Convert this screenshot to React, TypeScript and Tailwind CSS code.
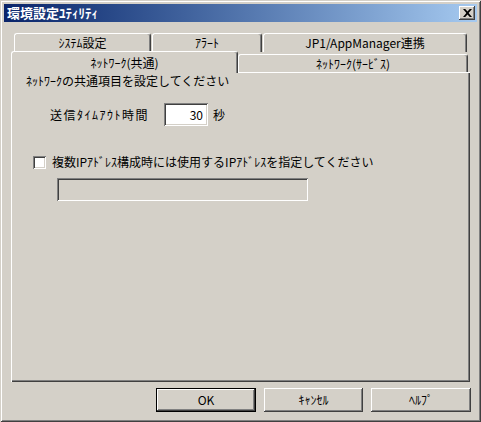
const raised =
  "shadow-[inset_-1px_-1px_0_#404040,inset_1px_1px_0_#ffffff,inset_-2px_-2px_0_#808080,inset_2px_2px_0_#d4d0c8]";
const sunken =
  "shadow-[inset_1px_1px_0_#808080,inset_-1px_-1px_0_#ffffff,inset_2px_2px_0_#404040,inset_-2px_-2px_0_#d4d0c8]";
const frame =
  "shadow-[inset_1px_1px_0_#d4d0c8,inset_-1px_-1px_0_#404040,inset_2px_2px_0_#ffffff,inset_-2px_-2px_0_#808080]";

const Tab = ({ label, className }: { label: string; className: string }) => (
  <div
    className={`flex items-center justify-center bg-[#d4d0c8] border-l border-t border-r border-l-white border-t-white border-r-[#404040] rounded-t-[3px] shadow-[inset_-1px_0_0_#808080] ${className}`}
  >
    {label}
  </div>
);

const Button = ({ label, isDefault }: { label: string; isDefault?: boolean }) => (
  <div
    className={`flex items-center justify-center h-[24px] ${
      isDefault ? "border border-black" : ""
    }`}
  >
    <div className={`w-full h-full flex items-center justify-center ${raised}`}>{label}</div>
  </div>
);

export default function App() {
  return (
    <div
      className={`w-[481px] h-[422px] bg-[#d4d0c8] p-[4px] flex flex-col text-[12px] leading-[14px] text-black font-['Noto_Sans_CJK_JP',sans-serif] ${frame}`}
    >
      {/* title bar */}
      <div className="h-[18px] flex items-center justify-between bg-linear-to-r from-[#0a246a] to-[#a6caf0]">
        <span className="pl-[3px] text-white font-bold text-[13px]">環境設定ﾕﾃｨﾘﾃｨ</span>
        <div className={`mr-[2px] w-[16px] h-[14px] bg-[#d4d0c8] flex items-center justify-center ${raised}`}>
          <svg width="9" height="8" viewBox="0 0 9 8">
            <path d="M0 0h2.2l2.3 2.4L6.8 0H9L5.6 4 9 8H6.8L4.5 5.6 2.2 8H0l3.4-4z" fill="#000" />
          </svg>
        </div>
      </div>

      {/* tabs */}
      <div className="mt-[11px] pl-[7px]">
        <div className="flex h-[19px] pl-[3px] gap-px">
          <Tab label="ｼｽﾃﾑ設定" className="w-[137px] h-full" />
          <Tab label="ｱﾗｰﾄ" className="w-[110px] h-full" />
          <Tab label="JP1/AppManager連携" className="w-[204px] h-full" />
        </div>
        <div className="flex items-end h-[21px] -mt-px">
          <Tab label="ﾈｯﾄﾜｰｸ(共通)" className="w-[227px] h-[22px] -mb-px relative z-10" />
          <Tab label="ﾈｯﾄﾜｰｸ(ｻｰﾋﾞｽ)" className="w-[230px] h-[18px]" />
        </div>

        {/* panel */}
        <div className="w-[459px] h-[310px] border-l border-t border-white shadow-[inset_-1px_-1px_0_#404040,inset_-2px_-2px_0_#808080] pl-[14px] pt-px">
          <div>ﾈｯﾄﾜｰｸの共通項目を設定してください</div>
          <div className="mt-[15px] ml-[24px] flex items-center">
            <span className="w-[114px] tracking-[1.5px]">送信ﾀｲﾑｱｳﾄ時間</span>
            <div className={`w-[44px] h-[23px] bg-white flex items-center justify-end pr-[5px] ${sunken}`}>30</div>
            <span className="ml-[5px]">秒</span>
          </div>
          <div className="mt-[29px] ml-[7px] flex items-center">
            <div className={`w-[13px] h-[13px] bg-white ${sunken}`} />
            <span className="ml-[6px]">複数IPｱﾄﾞﾚｽ構成時には使用するIPｱﾄﾞﾚｽを指定してください</span>
          </div>
          <div className={`mt-[9px] ml-[31px] w-[251px] h-[23px] bg-[#d4d0c8] ${sunken}`} />
        </div>
      </div>

      {/* buttons */}
      <div className="mt-[6px] flex justify-end gap-[8px] pr-[6px]">
        <div className="w-[100px]">
          <Button label="OK" isDefault />
        </div>
        <div className="w-[99px]">
          <Button label="ｷｬﾝｾﾙ" />
        </div>
        <div className="w-[100px]">
          <Button label="ﾍﾙﾌﾟ" />
        </div>
      </div>
    </div>
  );
}
